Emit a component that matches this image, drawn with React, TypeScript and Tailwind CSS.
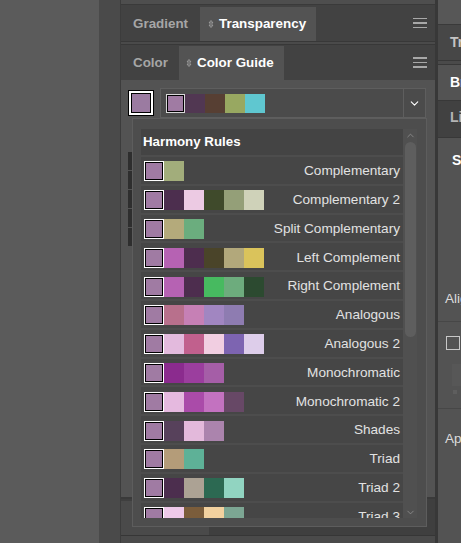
import { ChevronDown, ChevronUp } from 'lucide-react'

const BASE = '#a07ba3'

const RULES = [
  { name: 'Complementary', colors: ['#a2ad7b'] },
  { name: 'Complementary 2', colors: ['#4c2e4e', '#eccae3', '#3f4a2b', '#949f78', '#cfd2b9'] },
  { name: 'Split Complementary', colors: ['#b4aa7b', '#6bad7e'] },
  { name: 'Left Complement', colors: ['#b662b3', '#4d2d4e', '#4a4429', '#b2a87b', '#dac35b'] },
  { name: 'Right Complement', colors: ['#b662b3', '#4d2d4e', '#47ba60', '#6dac7d', '#2c4a30'] },
  { name: 'Analogous', colors: ['#b8708c', '#c680b5', '#a186c1', '#8e7cb1'] },
  { name: 'Analogous 2', colors: ['#e3badd', '#c1608d', '#f1cee1', '#7d64b1', '#ddcdea'] },
  { name: 'Monochromatic', colors: ['#8b2b8e', '#9b3e9e', '#a55ea7'] },
  { name: 'Monochromatic 2', colors: ['#e5b9df', '#aa4ba9', '#c372c0', '#674866'] },
  { name: 'Shades', colors: ['#57415b', '#e3b9db', '#ab84ad'] },
  { name: 'Triad', colors: ['#b49c79', '#5eb197'] },
  { name: 'Triad 2', colors: ['#4c2e4e', '#aca294', '#2c6952', '#91d4c1'] },
  { name: 'Triad 3', colors: ['#eec9e9', '#7b5d3b', '#f2d19f', '#7ca693'] },
]

const GUIDE = ['#513752', '#573f33', '#98a861', '#5fc7d0']

function MenuIcon() {
  return (
    <div className="flex w-[14px] flex-col gap-[3px]">
      <div className="h-[1.5px] bg-[#a8a8a8]" />
      <div className="h-[1.5px] bg-[#a8a8a8]" />
      <div className="h-[1.5px] bg-[#a8a8a8]" />
    </div>
  )
}

function TabArrows() {
  return (
    <svg width="6" height="10" viewBox="0 0 6 10" fill="none" stroke="#9a9a9a" strokeWidth="1">
      <path d="M1 4 L3 1.5 L5 4 Z" />
      <path d="M1 6 L3 8.5 L5 6 Z" />
    </svg>
  )
}

function BaseSwatch() {
  return (
    <div className="h-[20px] w-[20px] shrink-0 border border-white">
      <div className="h-full w-full border border-black" style={{ backgroundColor: BASE }} />
    </div>
  )
}

export default function App() {
  return (
    <div className="flex h-[543px] w-[461px] overflow-hidden bg-[#5b5b5b] font-['Liberation_Sans',Arial,sans-serif]">
      {/* canvas + gutter */}
      <div className="w-[99px] shrink-0 bg-[#5b5b5b]" />
      <div className="w-[21px] shrink-0 bg-[#4a4a4a]" />

      {/* main panel */}
      <div className="relative flex w-[315px] shrink-0 flex-col border-l border-[#3c3c3c]">
        <div className="h-[5px] border-b border-[#3a3a3a] bg-[#4e4e4e]" />
        <div className="flex h-[36px] items-end bg-[#424242] pr-[8px]">
          <div className="flex h-[34px] w-[79px] items-center pl-[12px] text-[13.4px] font-bold text-[#a6a6a6]">Gradient</div>
          <div className="flex h-[34px] w-[116px] items-center gap-[5px] bg-[#535353] pl-[8px] text-[13.4px] font-bold text-white">
            <TabArrows />
            <span>Transparency</span>
          </div>
          <div className="flex flex-1 items-center justify-end self-center">
            <MenuIcon />
          </div>
        </div>
        <div className="h-[4px] border-y border-[#383838] bg-[#4a4a4a]" />
        <div className="flex h-[35px] items-end bg-[#424242] pr-[8px]">
          <div className="flex h-[34px] w-[58px] items-center pl-[12px] text-[13.4px] font-bold text-[#a6a6a6]">Color</div>
          <div className="flex h-[34px] w-[105px] items-center gap-[5px] bg-[#535353] pl-[7px] text-[13.4px] font-bold text-white">
            <TabArrows />
            <span>Color Guide</span>
          </div>
          <div className="flex flex-1 items-center justify-end self-center">
            <MenuIcon />
          </div>
        </div>

        {/* color guide content */}
        <div className="flex h-[417px] flex-col bg-[#535353] pl-[7px] pr-[9px] pt-[8px]">
          <div className="flex h-[30px] items-center gap-[6px]">
            <div className="h-[26px] w-[26px] shrink-0 border border-black bg-white p-[2px]">
              <div className="h-full w-full border border-black bg-[#9b7ba1]" />
            </div>
            <div className="flex h-[30px] flex-1 border border-[#5e5e5e] bg-[#4b4b4b]">
              <div className="flex flex-1 items-center pl-[5px]">
                <div className="h-[19px] w-[19px] border border-[#d8d8d8]">
                  <div className="h-full w-full border border-black bg-[#a07ba3]" />
                </div>
                {GUIDE.map((c) => (
                  <div key={c} className="h-[19px] w-[20px]" style={{ backgroundColor: c }} />
                ))}
              </div>
              <div className="flex w-[22px] items-center justify-center border-l border-[#5e5e5e] text-white">
                <ChevronDown size={13} strokeWidth={2} />
              </div>
            </div>
          </div>
          <div className="mt-[34px] flex w-[4px] flex-col gap-[1px]">
            {[0, 1, 2, 3, 4].map((i) => (
              <div key={i} className="h-[18px] bg-[#2e2e2e]" />
            ))}
          </div>
        </div>

        {/* next panel peeking below */}
        <div className="flex flex-1 flex-col border-t-2 border-[#3a3a3a] bg-[#3f3f3f]">
          <div className="flex h-[36px] items-end">
            <div className="h-[34px] w-[88px] bg-[#4a4a4a]" />
          </div>
          <div className="h-[1px] bg-[#363636]" />
          <div className="flex-1 bg-[#4a4a4a]" />
        </div>

        {/* harmony rules popover */}
        <div className="absolute left-[11px] top-[118px] flex h-[409px] w-[295px] border border-[#5d5d5d] bg-[#4d4d4d] pb-[8px] pl-[8px] pr-[9px] pt-[10px]">
          <div className="flex w-[262px] flex-col gap-[2px] overflow-hidden">
            <div className="flex h-[26px] shrink-0 items-center bg-[#444444] pl-[2px] text-[13.3px] font-bold text-white">
              Harmony Rules
            </div>
            {RULES.map((r) => (
              <div key={r.name} className="flex h-[26.8px] shrink-0 items-center bg-[#464646] pl-[3px] pr-[3px] pt-[2px]">
                <BaseSwatch />
                {r.colors.map((c, i) => (
                  <div key={i} className="h-[20px] w-[20px] shrink-0" style={{ backgroundColor: c }} />
                ))}
                <span className="ml-auto text-[13.6px] text-[#e2e2e2]">{r.name}</span>
              </div>
            ))}
          </div>
          <div className="flex w-[14px] flex-col items-center bg-[#505050] pt-[1px]">
            <ChevronUp size={11} strokeWidth={1.5} className="text-[#9c9c9c]" />
            <div className="mt-[1px] h-[195px] w-[11px] rounded-full bg-[#5e5e5e]" />
            <div className="flex-1" />
            <ChevronDown size={11} strokeWidth={1.5} className="text-[#9c9c9c]" />
          </div>
        </div>
      </div>

      {/* divider */}
      <div className="w-[3px] shrink-0 bg-[#383838]" />

      {/* right panel */}
      <div className="flex flex-1 flex-col overflow-hidden whitespace-nowrap bg-[#535353] text-[13.5px]">
        <div className="h-[25px] border-b border-[#3a3a3a] bg-[#575757]" />
        <div className="flex h-[35px] items-center bg-[#474747] pl-[12px] text-[14px] font-bold text-[#c4c4c4]">Transform</div>
        <div className="h-[5px] border-y border-[#383838] bg-[#4a4a4a]" />
        <div className="flex h-[35px] items-center bg-[#535353] pl-[12px] text-[14px] font-bold text-white">Brushes</div>
        <div className="flex h-[38px] items-center border-y border-[#383838] bg-[#414141] pb-[4px] pl-[12px] text-[14px] font-bold text-[#b4b4b4]">Libraries</div>
        <div className="flex flex-1 flex-col">
          <div className="mt-[12px] flex items-center gap-[5px] pl-[9px] text-[14px] font-bold text-white">
            <TabArrows />
            <span>Swatches</span>
          </div>
          <div className="mt-[118px] pl-[7px] text-[#dcdcdc]">Align</div>
          <div className="mt-[12px] h-[1px] bg-[#474747]" />
          <div className="ml-[8px] mt-[14px] h-[14px] w-[14px] border border-[#c8c8c8]" />
          <div className="ml-[14px] mt-[14px] h-[22px] w-[20px] bg-[#575757]" />
          <div className="ml-[15px] mt-[4px] h-[4px] w-[4px] bg-[#5e5e5e]" />
          <div className="mt-[14px] h-[1px] bg-[#474747]" />
          <div className="mt-[20px] pl-[7px] text-[#dcdcdc]">Appearance</div>
        </div>
      </div>
    </div>
  )
}
